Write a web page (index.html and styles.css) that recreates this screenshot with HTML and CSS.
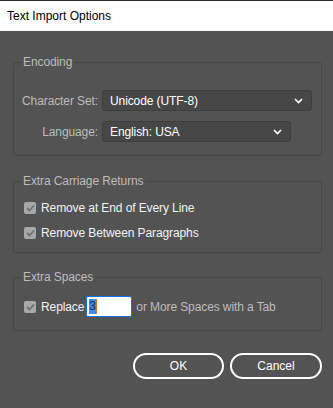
FILE: index.html
```html
<!DOCTYPE html>
<html lang="en">
  <head>
    <meta charset="utf-8" />
    <title>Text Import Options</title>
    <link rel="stylesheet" href="styles.css">
  </head>
  <body>
    <div class="title-bar">Text Import Options</div>

    <div class="dialog">
      <!--Encoding-->
      <fieldset class="group group-encoding">
        <legend>Encoding</legend>
        <div class="form-grid">
          <span class="field-label">Character Set:</span>
          <div class="select">
            <span>Unicode (UTF-8)</span>
            <svg width="9" height="6" viewBox="0 0 9 6"><path d="M1 1l3.5 3.5L8 1" fill="none" stroke="#fff" stroke-width="1.6"></path></svg>
          </div>
          <span class="field-label">Language:</span>
          <div class="select select-short">
            <span>English: USA</span>
            <svg width="9" height="6" viewBox="0 0 9 6"><path d="M1 1l3.5 3.5L8 1" fill="none" stroke="#fff" stroke-width="1.6"></path></svg>
          </div>
        </div>
      </fieldset>

      <!--Carriage returns-->
      <fieldset class="group group-returns">
        <legend>Extra Carriage Returns</legend>
        <div class="check-row">
          <span class="checkbox"><svg width="9" height="8" viewBox="0 0 9 8"><path d="M1 4l2.5 2.5L8 1.5" fill="none" stroke="#6e6e6e" stroke-width="1.8"></path></svg></span>
          <span>Remove at End of Every Line</span>
        </div>
        <div class="check-row">
          <span class="checkbox"><svg width="9" height="8" viewBox="0 0 9 8"><path d="M1 4l2.5 2.5L8 1.5" fill="none" stroke="#6e6e6e" stroke-width="1.8"></path></svg></span>
          <span>Remove Between Paragraphs</span>
        </div>
      </fieldset>

      <!--Spaces-->
      <fieldset class="group group-spaces">
        <legend>Extra Spaces</legend>
        <div class="check-row check-row-input">
          <span class="checkbox"><svg width="9" height="8" viewBox="0 0 9 8"><path d="M1 4l2.5 2.5L8 1.5" fill="none" stroke="#6e6e6e" stroke-width="1.8"></path></svg></span>
          <span>Replace</span>
          <div class="number-input"><span class="selected">3</span><span class="caret"></span></div>
          <span class="muted">or More Spaces with a Tab</span>
        </div>
      </fieldset>

      <div class="footer">
        <button class="btn" type="button">OK</button>
        <button class="btn" type="button">Cancel</button>
      </div>
    </div>
  </body>
</html>
```

FILE: styles.css
```css
html,
body {
  margin: 0;
  height: 100%;
  background-color: #535353;
  font-family: "Liberation Sans", Arial, sans-serif;
  font-size: 12px;
  letter-spacing: -0.1px;
}
.title-bar {
  height: 30px;
  line-height: 30px;
  border-top: 1px solid #2a2a2a;
  background-color: #fff;
  color: #000;
  font-size: 12px;
  letter-spacing: 0;
  padding-left: 7px;
}
.dialog {
  padding: 23px 11px 0 13px;
}
.group {
  margin: 0;
  padding: 0 9px 0 7px;
  min-width: 0;
  border: 1px solid #464646;
  border-radius: 3px;
}
.group legend {
  padding: 0 2px;
  line-height: 16px;
  color: #bcbcbc;
}
.group-returns {
  margin-top: 17px;
  padding-bottom: 7px;
}
.group-spaces {
  margin-top: 16px;
  padding-bottom: 13px;
}
.form-grid {
  display: grid;
  grid-template-columns: 77px 1fr;
  column-gap: 4px;
  row-gap: 10px;
  align-items: center;
  margin-top: 20px;
  margin-bottom: 13px;
}
.field-label {
  text-align: right;
  white-space: nowrap;
  color: #bcbcbc;
}
.select {
  height: 21px;
  box-sizing: border-box;
  display: flex;
  align-items: center;
  justify-content: space-between;
  padding: 0 8px 0 7px;
  background-color: #474747;
  border: 1px solid #3e3e3e;
  border-radius: 3px;
  color: #fff;
}
.select-short {
  width: 189px;
}
.check-row {
  display: flex;
  align-items: center;
  gap: 5px;
  height: 25px;
  padding-left: 3px;
  color: #f2f2f2;
}
.group-returns .check-row:first-of-type {
  margin-top: 6px;
}
.check-row-input {
  height: 21px;
  margin-top: 11px;
  gap: 0;
}
.check-row-input .checkbox {
  margin-right: 5px;
}
.checkbox {
  width: 12px;
  height: 12px;
  border-radius: 2px;
  background-color: #a8a8a8;
  display: flex;
  align-items: center;
  justify-content: center;
}
.number-input {
  width: 46px;
  height: 21px;
  box-sizing: border-box;
  margin: 0 4px 0 2px;
  padding: 2px 2px;
  display: flex;
  align-items: center;
  background-color: #fff;
  border: 1px solid #1473e6;
  border-radius: 2px;
  color: #0b2a5c;
}
.selected {
  background-color: #3f8be8;
  line-height: 15px;
}
.caret {
  width: 1px;
  height: 15px;
  background-color: #d8751f;
}
.muted {
  color: #bcbcbc;
}
.footer {
  display: flex;
  justify-content: flex-end;
  gap: 6px;
  margin-top: 22px;
}
.btn {
  width: 91px;
  height: 26px;
  border: 2px solid #fff;
  border-radius: 13px;
  background: transparent;
  color: #fff;
  font-family: inherit;
  font-size: 12px;
}
.btn + .btn {
  width: 92px;
}
```
